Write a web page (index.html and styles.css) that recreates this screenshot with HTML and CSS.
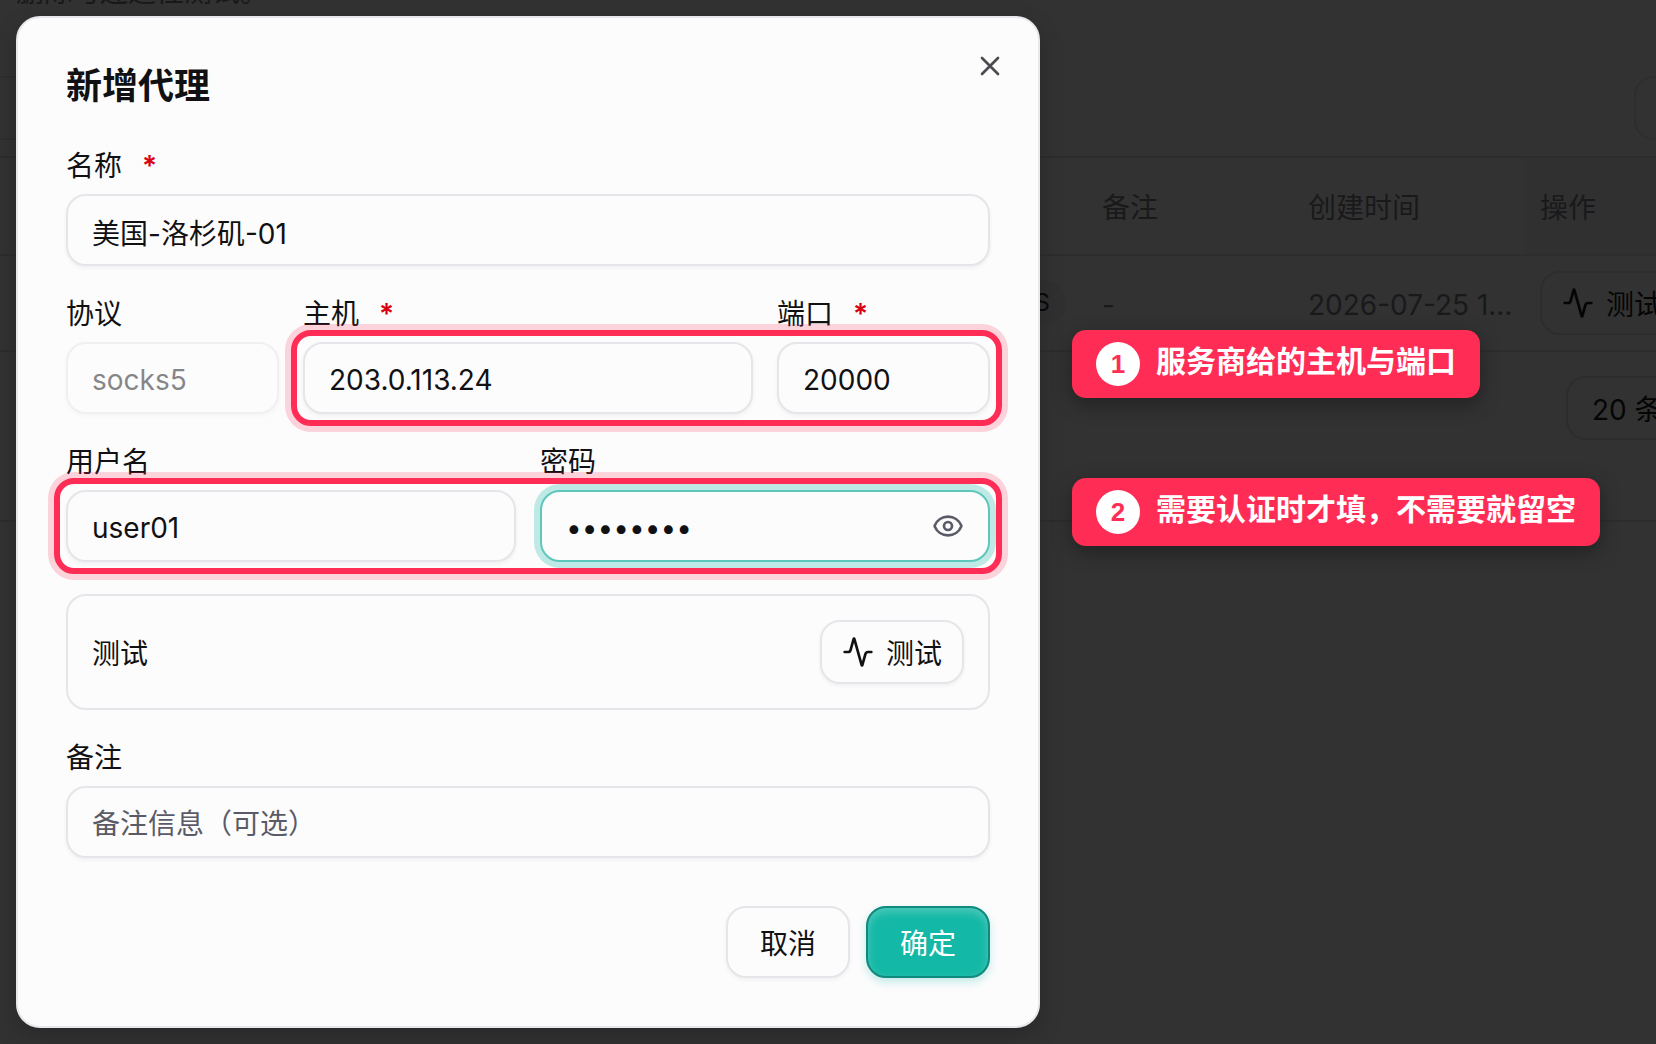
FILE: index.html
```html
<!DOCTYPE html>
<html lang="zh-CN">
<head>
<meta charset="utf-8">
<meta name="viewport" content="width=device-width, initial-scale=1">
<title>新增代理</title>
<link rel="stylesheet" href="styles.css">
</head>
<body>
<svg class="sprite" aria-hidden="true">
  <symbol id="icon-activity" viewBox="0 0 24 24"><path d="M22 12h-2.48a2 2 0 0 0-1.93 1.46l-2.35 8.36a.25.25 0 0 1-.48 0L9.24 2.18a.25.25 0 0 0-.48 0l-2.35 8.36A2 2 0 0 1 4.49 12H2"/></symbol>
  <symbol id="icon-eye" viewBox="0 0 24 24"><path d="M2.06 12.35a1 1 0 0 1 0-.7 10.75 10.75 0 0 1 19.88 0 1 1 0 0 1 0 .7 10.75 10.75 0 0 1-19.88 0"/><circle cx="12" cy="12" r="3"/></symbol>
  <symbol id="icon-close" viewBox="0 0 24 24"><path d="M18 6 6 18M6 6l12 12"/></symbol>
</svg>

<main class="page">
  <p class="intro">删除与连通性测试。</p>
  <div class="toolbar">
    <div class="toolbar-box toolbar-search"></div>
    <div class="toolbar-box toolbar-action"></div>
  </div>
  <table class="proxies">
    <thead>
      <tr><th class="col-main"></th><th class="col-note">备注</th><th class="col-time">创建时间</th><th class="col-ops">操作</th></tr>
    </thead>
    <tbody>
      <tr>
        <td class="cell-tag"><span class="tag">SOCKS</span></td>
        <td class="cell-text">-</td>
        <td class="cell-text cell-time">2026-07-25 1…</td>
        <td class="col-ops"><button class="button button-ghost" type="button"><svg class="icon"><use href="#icon-activity"/></svg><span class="button-text">测试</span></button></td>
      </tr>
    </tbody>
  </table>
  <div class="pager"><button class="button button-ghost button-pager" type="button"><span class="button-text">20 条/页</span></button></div>
</main>

<div class="overlay">
  <form class="dialog" role="dialog" aria-labelledby="dialog-title">
    <button class="close" type="button" aria-label="关闭"><svg class="icon"><use href="#icon-close"/></svg></button>
    <h1 class="title" id="dialog-title">新增代理</h1>
    <div class="fields">
      <div class="field">
        <label class="label" for="name">名称<span class="required">*</span></label>
        <input class="input" id="name" type="text" value="美国-洛杉矶-01">
      </div>
      <div class="row">
        <div class="field">
          <label class="label" for="protocol">协议</label>
          <input class="input" id="protocol" type="text" value="socks5" disabled>
        </div>
        <div class="group group-host">
          <div class="field field-wide">
            <label class="label" for="host">主机<span class="required">*</span></label>
            <input class="input" id="host" type="text" value="203.0.113.24">
          </div>
          <div class="field">
            <label class="label" for="port">端口<span class="required">*</span></label>
            <input class="input" id="port" type="text" value="20000">
          </div>
          <div class="marker"></div>
          <div class="callout"><span class="number">1</span><span class="callout-text">服务商给的主机与端口</span></div>
        </div>
      </div>
      <div class="group group-auth">
        <div class="field">
          <label class="label" for="user">用户名</label>
          <input class="input" id="user" type="text" value="user01">
        </div>
        <div class="field">
          <label class="label" for="password">密码</label>
          <div class="input input-focused">
            <input class="bare" id="password" type="password" value="password">
            <button class="reveal" type="button" aria-label="显示密码"><svg class="icon"><use href="#icon-eye"/></svg></button>
          </div>
        </div>
        <div class="marker"></div>
        <div class="callout"><span class="number">2</span><span class="callout-text">需要认证时才填，不需要就留空</span></div>
      </div>
      <div class="test">
        <span class="button-text">测试</span>
        <button class="button" type="button"><svg class="icon"><use href="#icon-activity"/></svg><span class="button-text">测试</span></button>
      </div>
      <div class="field">
        <label class="label" for="note">备注</label>
        <input class="input" id="note" type="text" placeholder="备注信息（可选）">
      </div>
    </div>
    <div class="footer">
      <button class="button button-large" type="button"><span class="button-text">取消</span></button>
      <button class="button button-large button-primary" type="submit"><span class="button-text">确定</span></button>
    </div>
  </form>
</div>
</body>
</html>
```
FILE: styles.css
```css
* {
  box-sizing: border-box;
}

body {
  margin: 0;
  min-height: 100vh;
  overflow: hidden;
  background: #323232;
  color: #111113;
  font: 400 28px/28px Inter, "Noto Sans CJK SC", sans-serif;
}

button,
input {
  font: inherit;
  color: inherit;
}

.sprite {
  display: none;
}

.icon {
  flex: none;
  width: 32px;
  height: 32px;
  fill: none;
  stroke: currentColor;
  stroke-width: 2;
  stroke-linecap: round;
  stroke-linejoin: round;
}

/* Page behind the dialog */

.page {
  position: absolute;
  inset: 0;
  overflow: hidden;
  color: #19191b;
}

.intro {
  display: flex;
  align-items: flex-end;
  height: 6px;
  margin: 0 16px;
  overflow: hidden;
}

.toolbar {
  display: flex;
  justify-content: space-between;
  margin: 0 -100px 0 -20px;
  padding: 70px 0 16px;
}

.toolbar-box {
  height: 64px;
  border: 2px solid #2e2e2e;
  border-radius: 20px;
}

.toolbar-search {
  width: 400px;
}

.toolbar-action {
  width: 122px;
}

.proxies {
  width: 100%;
  table-layout: fixed;
  border-collapse: separate;
  border-spacing: 0;
  border-top: 2px solid #2d2d2d;
  white-space: nowrap;
}

.proxies th,
.proxies td {
  height: 96px;
  padding: 0 24px;
  border-bottom: 2px solid #2d2d2d;
  text-align: left;
  font-weight: 400;
  overflow: hidden;
}

.proxies th {
  height: 98px;
  padding-top: 4px;
}

.proxies .cell-text {
  padding-top: 4px;
}

.col-note {
  width: 206px;
}

.col-time {
  width: 240px;
}

.proxies .col-ops {
  width: 132px;
  padding-left: 16px;
  padding-right: 0;
}

.proxies th.col-ops {
  background: #303030;
}

.proxies .cell-tag {
  padding: 0 12px;
  text-align: right;
}

.proxies .cell-time {
  padding-right: 0;
}

.tag {
  display: inline-block;
  padding: 8px 16px;
  border-radius: 22px;
  background: #303030;
  color: #09090b;
  font-size: 24px;
}

.pager {
  display: flex;
  justify-content: flex-end;
  margin-right: -72px;
  padding: 24px 0 80px;
  border-bottom: 2px solid #2d2d2d;
}

/* Controls */

.button {
  display: inline-flex;
  align-items: center;
  justify-content: center;
  gap: 12px;
  height: 64px;
  padding: 0 20px;
  border: 2px solid #e6e6ea;
  border-radius: 20px;
  background: #fcfcfd;
  box-shadow: 0 2px 4px rgba(0, 0, 0, 0.05);
  vertical-align: middle;
  white-space: nowrap;
}

.button-text {
  padding-top: 4px;
}

.button-ghost {
  border-color: #2d2d2d;
  background: transparent;
  box-shadow: none;
  color: #050506;
}

.button-pager {
  width: 162px;
  padding: 0 24px;
  justify-content: flex-start;
}

.button-large {
  height: 72px;
  padding: 0 32px;
}

.button-primary {
  border-color: #12897d;
  background: #14b8a6;
  box-shadow: inset 0 4px 8px rgba(255, 255, 255, 0.25), 0 4px 8px rgba(20, 184, 166, 0.25);
  color: #fff;
}

.input {
  display: flex;
  align-items: center;
  width: 100%;
  height: 72px;
  padding: 4px 24px 0;
  border: 2px solid #e6e6ea;
  border-radius: 20px;
  background: #fcfcfd;
  box-shadow: 0 2px 4px rgba(0, 0, 0, 0.05);
  line-height: 48px;
  outline: none;
}

.input:disabled {
  opacity: 0.5;
}

.input::placeholder {
  color: #5a5b66;
  opacity: 1;
}

.input-focused {
  padding-top: 0;
  border-color: #5ec6bb;
  box-shadow: 0 0 0 6px #bfe9e5;
}

.bare {
  flex: 1;
  min-width: 0;
  padding: 4px 0 0;
  border: 0;
  outline: 0;
  background: none;
}

.reveal,
.close {
  display: flex;
  padding: 0;
  border: 0;
  background: none;
  color: #5a5b66;
}

/* Dialog */

.overlay {
  position: relative;
  padding: 16px;
}

.dialog {
  position: relative;
  width: 100%;
  max-width: 1024px;
  padding: 48px;
  border: 2px solid #e8e8ec;
  border-radius: 24px;
  background: #fcfcfd;
  box-shadow: 0 8px 24px rgba(0, 0, 0, 0.2);
}

.close {
  position: absolute;
  top: 32px;
  right: 32px;
  color: #4c4c50;
}

.title {
  margin: 0 0 44px;
  font-size: 36px;
  line-height: 40px;
  font-weight: 700;
}

.fields {
  display: grid;
  gap: 32px;
}

.field {
  display: grid;
  grid-template-columns: minmax(0, 1fr);
  gap: 12px;
  min-width: 0;
}

.label {
  display: flex;
  gap: 20px;
  line-height: 32px;
}

.required {
  color: #d90010;
  font-weight: 600;
}

.row {
  display: grid;
  grid-template-columns: repeat(4, minmax(0, 1fr));
  gap: 24px;
}

.group {
  position: relative;
  display: grid;
  gap: 24px;
}

.group-host {
  grid-column: span 3;
  grid-template-columns: repeat(3, minmax(0, 1fr));
}

.group-auth {
  grid-template-columns: repeat(2, minmax(0, 1fr));
}

.field-wide {
  grid-column: span 2;
}

.test {
  display: flex;
  align-items: center;
  justify-content: space-between;
  padding: 24px;
  border: 2px solid #e6e6ea;
  border-radius: 20px;
}

.footer {
  display: flex;
  justify-content: flex-end;
  gap: 16px;
  margin-top: 48px;
}

/* Annotations */

.marker {
  position: absolute;
  inset: 32px -12px -12px;
  border: 6px solid #ff2d55;
  border-radius: 20px;
  box-shadow: 0 0 0 6px rgba(255, 45, 85, 0.2);
  pointer-events: none;
}

.callout {
  position: absolute;
  top: 32px;
  left: calc(100% + 82px);
  display: flex;
  align-items: center;
  gap: 16px;
  padding: 12px 24px;
  border-radius: 14px;
  background: #ff2d55;
  box-shadow: 0 6px 20px rgba(0, 0, 0, 0.35);
  color: #fff;
  font-family: "Liberation Sans", "Noto Sans CJK SC", sans-serif;
  font-size: 30px;
  font-weight: 700;
  white-space: nowrap;
}

.callout-text {
  padding-bottom: 4px;
}

.number {
  display: grid;
  place-items: center;
  width: 44px;
  height: 44px;
  border-radius: 50%;
  background: #fff;
  color: #ff2d55;
  font-size: 26px;
}
```
